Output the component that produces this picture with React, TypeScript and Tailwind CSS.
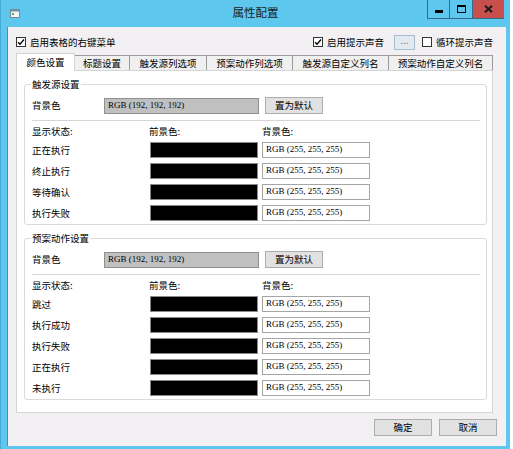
import React from 'react';

const rows1 = ['正在执行', '终止执行', '等待确认', '执行失败'];
const rows2 = ['跳过', '执行成功', '执行失败', '正在执行', '未执行'];
const tabs = [
  { label: '颜色设置', w: 'w-[59px]' },
  { label: '标题设置', w: 'w-[55px]' },
  { label: '触发源列选项', w: 'w-[77px]' },
  { label: '预案动作列选项', w: 'w-[86px]' },
  { label: '触发源自定义列名', w: 'w-[96px]' },
  { label: '预案动作自定义列名', w: 'w-[104px]' },
];

function CheckBox({ checked, label }: { checked?: boolean; label: string }) {
  return (
    <label className="flex items-center gap-[4px]">
      <span className="flex h-[10px] w-[10px] items-center justify-center border border-[#333333] bg-white">
        {checked && (
          <svg width="8" height="8" viewBox="0 0 8 8">
            <path d="M1 4.2 L3 6.2 L7 1.5" stroke="#000" strokeWidth="1.3" fill="none" />
          </svg>
        )}
      </span>
      <span>{label}</span>
    </label>
  );
}

function Button({ label, w = 'w-[58px]' }: { label: string; w?: string }) {
  return (
    <button className={`${w} flex h-[17px] items-center justify-center border border-[#adadad] bg-[#e1e1e1] text-black`}>
      {label}
    </button>
  );
}

function RgbBox({ value, gray }: { value: string; gray?: boolean }) {
  return (
    <div
      className={`flex h-[16px] items-center border pl-[3px] font-['Liberation_Serif',serif] text-[9px] text-black ${
        gray ? 'w-[155px] border-[#8f8f8f] bg-[#c0c0c0]' : 'ml-[4px] w-[108px] border-[#a5a5a5] bg-white'
      }`}
    >
      {value}
    </div>
  );
}

function Group({ title, rows }: { title: string; rows: string[] }) {
  return (
    <fieldset className="mt-[7px] ml-[7px] w-[463px] rounded-[3px] border border-[#dadada] bg-white pr-[6px] pb-[3px] pl-[7px] pt-[7px]">
      <legend className="-ml-[1px] px-[1px] leading-[12px]">{title}</legend>
      <div className="flex h-[17px] items-center">
        <span className="w-[72px]">背景色</span>
        <RgbBox value="RGB (192, 192, 192)" gray />
        <div className="ml-[6px]">
          <Button label="置为默认" />
        </div>
      </div>
      <div className="mt-[6px] h-px bg-[#d6d6d6]" />
      <div className="flex h-[21px] items-center">
        <span className="w-[117px]">显示状态:</span>
        <span className="w-[113px]">前景色:</span>
        <span>背景色:</span>
      </div>
      <div className="flex flex-col gap-[5px]">
        {rows.map((r, i) => (
          <div key={i} className="flex h-[16px] items-center">
            <span className="w-[118px]">{r}</span>
            <div className="h-[16px] w-[108px] border border-[#8a8a8a] bg-black" />
            <RgbBox value="RGB (255, 255, 255)" />
          </div>
        ))}
      </div>
    </fieldset>
  );
}

export default function App() {
  return (
    <div className="flex h-[449px] w-[513px] bg-white font-['Noto_Sans_CJK_SC','Noto_Sans',sans-serif] text-[9.5px] text-black">
      <div className="flex h-[449px] w-[510px] flex-col border-l border-[#49a9d6] bg-[#5dc7ee]">
        {/* title bar */}
        <div className="grid h-[27px] grid-cols-[1fr_auto_1fr]">
          <div className="pl-[9px] pt-[9px]">
            <svg width="10" height="9" viewBox="0 0 10 9">
              <rect x="0.5" y="0.5" width="9" height="8" fill="#f4f4f4" stroke="#7a8c99" />
              <rect x="1" y="1" width="8" height="1.5" fill="#6f8fb0" />
              <rect x="2" y="4" width="2" height="2" fill="#4caf50" />
            </svg>
          </div>
          <div className="pt-[4px] text-[11.5px] leading-[16px] text-[#1b1b1b]">属性配置</div>
          <div className="flex justify-end pr-[6px]">
            <div className="flex h-[19px] border-b border-l border-[#356a8a]">
              <div className="flex w-[22px] items-end justify-center border-r border-[#356a8a] pb-[5px]">
                <div className="h-[3px] w-[8px] bg-black" />
              </div>
              <div className="flex w-[23px] items-center justify-center border-r border-[#356a8a]">
                <div className="h-[8px] w-[9px] border border-t-2 border-black" />
              </div>
              <div className="flex w-[31px] items-center justify-center bg-[#c7504c]">
                <svg width="9" height="8" viewBox="0 0 9 8">
                  <path d="M1 0.8 L8 7.2 M8 0.8 L1 7.2" stroke="#1a1a1a" strokeWidth="2" />
                </svg>
              </div>
            </div>
          </div>
        </div>

        {/* client */}
        <div className="ml-[6px] mr-[4px] flex h-[419px] flex-col border-l border-[#3f8fb8] bg-[#f2f0f2]">
          <div className="mt-[10px] flex h-[10px] items-center justify-between pl-[8px] pr-[13px]">
            <CheckBox checked label="启用表格的右键菜单" />
            <div className="flex items-center">
              <CheckBox checked label="启用提示声音" />
              <div className="ml-[10px] flex h-[15px] w-[21px] items-center justify-center border border-[#a7bccd] bg-[#e2e9ef] pb-[3px] text-[#6a6a6a]">
                ...
              </div>
              <div className="ml-[7px]">
                <CheckBox label="循环提示声音" />
              </div>
            </div>
          </div>

          {/* tabs */}
          <div className="mt-[6px] ml-[8px] flex items-end">
            {tabs.map((t, i) =>
              i === 0 ? (
                <div
                  key={i}
                  className={`${t.w} relative z-10 -mb-px flex h-[18px] items-center justify-center border border-b-0 border-[#d4d4d4] bg-white`}
                >
                  {t.label}
                </div>
              ) : (
                <div
                  key={i}
                  className={`${t.w} flex h-[15px] items-center justify-center border-t border-r border-[#9a9a9a] bg-[#f0f0f0]`}
                >
                  {t.label}
                </div>
              ),
            )}
          </div>
          <div className="ml-[8px] flex h-[343px] w-[477px] flex-col border border-[#d4d4d4] bg-white">
            <Group title="触发源设置" rows={rows1} />
            <Group title="预案动作设置" rows={rows2} />
          </div>

          <div className="mt-[6px] flex justify-end gap-[7px] pr-[9px]">
            <Button label="确定" />
            <Button label="取消" />
          </div>
        </div>
      </div>
    </div>
  );
}
